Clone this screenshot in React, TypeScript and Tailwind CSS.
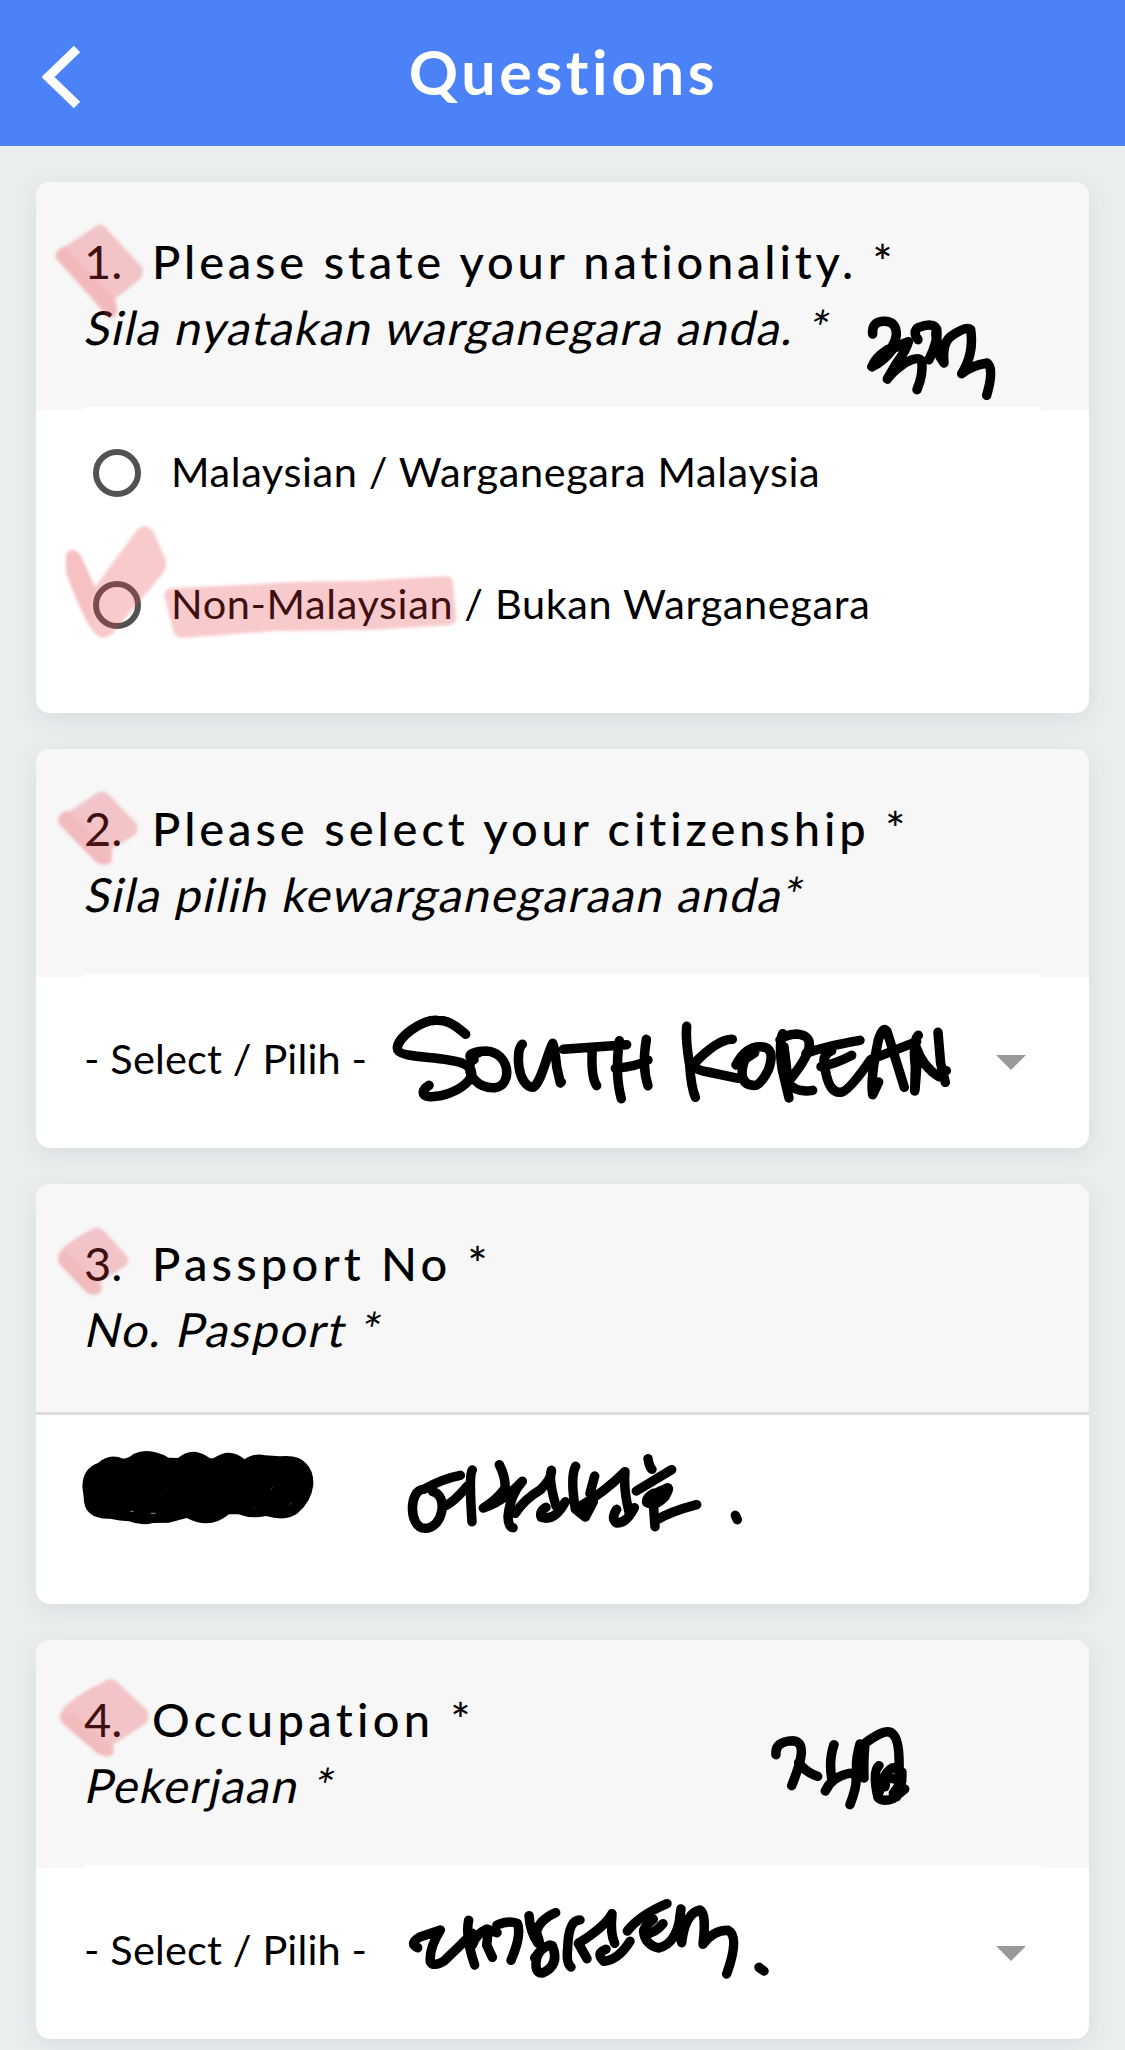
import type { ReactNode } from "react";

const FONT = "font-['Lato','Noto_Sans',sans-serif]";

function Header() {
  return (
    <header className="flex h-[146px] items-center bg-[#4c82f8] px-[42px]">
      <svg className="mt-[8px] h-[64px] w-[40px] flex-none" viewBox="0 0 40 64" fill="none">
        <path d="M35 4 L6 32 L35 60" stroke="#fff" strokeWidth="9" />
      </svg>
      <h1 className="flex-1 pr-[38px] pb-[2px] text-center text-[61px] leading-[72px] font-bold tracking-[3.6px] text-white">
        Questions
      </h1>
    </header>
  );
}

type CardProps = {
  no: number;
  title: string;
  titleTracking: string;
  subtitle: string;
  subTracking: string;
  lined?: boolean;
  bodyHeight: string;
  children?: ReactNode;
};

function Card({ no, title, titleTracking, subtitle, subTracking, lined, bodyHeight, children }: CardProps) {
  return (
    <section className="overflow-hidden rounded-[14px] bg-white shadow-[0_6px_24px_rgba(60,80,90,0.10)]">
      <div className={`flex flex-col bg-[#f7f7f7] ${lined ? "h-[231px]" : "h-[228px]"}`}>
        <div className="flex-1 px-[48px] pt-[46px] text-black">
          <h2 className="flex h-[66px] items-center text-[47px] whitespace-nowrap">
            <span className="w-[68px]">{no}.</span>
            <span className={`font-medium ${titleTracking}`}>{title}</span>
          </h2>
          <p className={`h-[66px] w-max origin-[0_70%] -skew-x-12 text-[47px] leading-[66px] whitespace-nowrap ${subTracking}`}>
            {subtitle}
          </p>
        </div>
        <div className={lined ? "h-[3px] bg-[#dedede]" : "mx-[48px] h-[3px] bg-white"} />
      </div>
      <div className={bodyHeight}>{children}</div>
    </section>
  );
}

function Option({ label, tracking }: { label: string; tracking: string }) {
  return (
    <label className="flex h-[132px] items-center pb-[6px]">
      <span className="mr-[30px] h-[48px] w-[48px] flex-none rounded-full border-[6px] border-[#525252]" />
      <span className={`pb-[4px] text-[41.5px] leading-[60px] whitespace-nowrap text-black ${tracking}`}>{label}</span>
    </label>
  );
}

function Select() {
  return (
    <div className="flex h-full items-center justify-between pr-[63px] pb-[6px] pl-[48px]">
      <span className="pb-[4px] text-[41.5px] leading-[60px] tracking-[0.15px] whitespace-nowrap text-black">
        - Select / Pilih -
      </span>
      <svg className="mt-[5px] h-[15px] w-[30px]" viewBox="0 0 30 15">
        <path d="M0 0H30L15 15Z" fill="#999" />
      </svg>
    </div>
  );
}

function Highlights() {
  return (
    <g fill="#e63e48" fillOpacity="0.27" filter="url(#soft)" strokeLinejoin="round">
      <path d="M98 225 Q102 223 107 229 L142 267 Q145 275 138 281 L115 299 L117 310 Q116 320 108 317 L91 297 L55 257 Q57 247 66 246 Z" />
      <path d="M66 247 L115 299 Q121 312 113 317 Q108 320 103 313 L56 259 Q56 249 66 247Z" fillOpacity="0.09" />
      <path d="M66 554 Q72 546 80 554 L95 587 L137 530 Q146 522 153 531 L166 560 Q167 570 160 577 L112 634 Q104 641 95 634 Q84 620 66 573Z" />
      <path d="M66 554 Q72 546 80 554 L95 587 Q88 605 92 630 Q80 614 66 573Z" fillOpacity="0.08" />
      <path d="M164 594 Q166 589 172 588 L260 584 L290 582 L360 581 L448 576 Q452 577 453 582 L456 615 Q457 623 450 625 L370 630 L275 631 L182 638 Q174 637 173 630Z" />
      <path d="M97 793 Q103 789 110 796 L136 823 Q140 830 135 835 L112 849 L112 861 Q108 868 96 862 L59 824 Q55 818 63 812 L70 811Z" />
      <path d="M63 812 Q70 809 76 818 L112 852 Q111 867 97 864 L58 824Z" fillOpacity="0.08" />
      <path d="M91 1230 Q97 1225 104 1231 L126 1255 Q130 1261 127 1265 L101 1281 L102 1290 Q98 1298 87 1293 L60 1265 Q55 1258 62 1249 Q75 1237 91 1230Z" />
      <path d="M60 1252 Q66 1250 75 1261 L101 1286 Q99 1298 87 1293 L58 1262Z" fillOpacity="0.08" />
      <path d="M104 1682 Q110 1676 117 1682 L147 1710 Q151 1718 145 1724 L113 1745 L114 1752 Q111 1759 98 1754 L62 1723 Q57 1717 64 1707 Q84 1690 104 1682Z" />
      <path d="M60 1713 Q67 1711 76 1716 L109 1744 L114 1752 Q109 1760 98 1754 L61 1722Z" fillOpacity="0.08" />
    </g>
  );
}

function Ink() {
  return (
    <g fill="none" stroke="#000" strokeWidth="28.5" strokeLinecap="round" strokeLinejoin="round">
      <g transform="translate(840 290) scale(0.33333)">
        <path d="M98 132 Q94 96 130 94 Q170 92 169 135 Q166 168 128 201 L96 230 Q103 205 142 179 L205 155 Q200 178 170 219 L142 267 Q157 245 190 222 Q232 196 245 212 Q251 250 231 299" />
        <path d="M96 230 Q130 215 160 175 L200 160" />
        <path d="M234 149 Q216 125 236 112 Q278 96 290 117 Q296 150 267 209" />
        <path d="M287 130 L300 200 L312 219 Q306 160 333 139 Q380 105 392 119 Q403 190 365 251 Q395 226 441 219 Q464 235 440 316" />
      </g>
      <g transform="translate(380 960) scale(0.33333)">
        <path d="M257 223 C215 185 195 181 172 181 C125 178 52 233 52 265 C52 297 185 286 246 309 C325 340 225 412 151 410 C122 408 124 390 147 376" />
        <path d="M282 299 C250 285 289 273 317 273 C390 275 400 375 346 383 C295 387 264 348 270 315 Q273 285 300 276" />
        <path d="M427 253 C405 270 412 380 460 382 C485 365 500 285 518 250 Q524 260 530 320 L541 369 L544 366" />
        <path d="M550 268 L740 254 M637 268 Q632 350 650 377 M718 242 Q704 345 724 416 M706 325 Q770 320 804 300 M799 238 Q785 320 804 377" />
      </g>
      <g transform="translate(660 960) scale(0.33333)">
        <path d="M80 199 Q76 240 89 315 Q93 380 106 412 M217 238 Q174 237 103 310 Q100 330 144 336 L235 355" />
        <path d="M284 278 L228 315 Q256 260 300 260 Q350 260 325 330 Q300 380 280 376 C238 375 242 330 256 296" />
        <path d="M368 221 Q355 250 367 330 L387 414 M360 240 Q374 224 410 222 Q455 226 447 263 Q439 300 382 368 Q410 400 458 391 M372 260 L387 385" />
        <path d="M438 280 Q490 260 600 241 M515 272 Q485 285 494 318 Q505 400 542 397 Q565 395 632 299 L770 245 M483 320 Q530 310 575 286" />
        <path d="M656 366 L638 404 Q630 360 655 240 Q670 195 681 214 L733 382 M775 226 Q757 240 766 320 L764 393 M768 260 Q788 320 837 350 L859 332 M834 217 L842 310 L856 367 M772 300 L765 390" />
      </g>
      <g transform="translate(390 1440) scale(0.33333)">
        <path d="M211 106 Q160 115 101 148 C55 150 56 265 105 265 C160 265 176 165 128 155 M164 198 Q190 188 232 138 M247 90 Q236 100 246 245" />
        <path d="M328 74 Q348 115 345 145 Q320 180 280 204 Q340 185 397 124 Q360 165 354 230 Q355 260 369 263 M376 220 Q400 180 453 148 Q488 110 484 91 Q475 120 498 198" />
        <path d="M468 202 Q447 215 454 232 Q495 245 526 185 M557 79 Q540 110 556 207 L586 231 L610 185 M614 108 L600 160 M560 205 Q640 160 705 95 Q700 150 718 220 L733 203 Q710 250 680 249 Q662 235 680 208" />
        <path d="M774 56 Q778 80 786 88 M739 153 L845 89 M792 190 L820 150 Q848 130 825 170 Q795 202 770 187 Q768 172 790 160 L820 160 M791 205 L795 260 M800 240 Q840 215 920 194" />
        <path d="M785 180 L815 160" strokeWidth="46" />
        <path d="M1036 226 L1042 239" />
      </g>
      <g transform="translate(750 1710) scale(0.33333)">
        <path d="M78 134 Q74 94 128 92 C170 95 156 150 125 227 M146 158 Q168 188 203 199" />
        <path d="M252 104 Q236 150 245 205 M226 243 Q245 200 298 190 Q338 183 300 284" />
        <path d="M330 102 Q314 160 322 188 L342 204 Q340 150 345 100 Q410 50 428 72 Q450 90 447 180" />
        <path d="M387 167 Q366 185 384 262 Q400 278 430 265 L464 237 M388 245 Q398 190 428 173 L456 186 L455 215 L430 250 M410 190 L405 230 M425 205 L448 210 L440 260" />
      </g>
      <g transform="translate(390 1880) scale(0.33333)">
        <path d="M83 203 Q55 190 92 170 L151 150 Q117 205 121 245 Q130 262 162 243 Q205 202 247 160 M236 121 Q225 170 254 255 M247 195 Q260 160 290 147 L321 158 M295 150 L290 195 L307 232 M321 135 Q355 120 382 130 Q396 165 363 241" />
        <path d="M417 107 Q420 155 444 190 M497 98 Q450 118 439 155 L448 185 M434 234 Q465 190 487 197 Q510 255 458 279 Q430 280 441 230 Q450 205 480 195" />
        <path d="M570 120 Q535 120 533 205 Q528 250 543 261 M666 101 Q645 140 565 190 L591 236 M666 101 Q660 160 674 190 M648 208 Q615 220 642 244 Q685 240 720 184" />
        <path d="M831 71 Q750 105 712 153 M790 118 Q755 145 762 160 Q790 165 819 131 M762 163 Q770 195 805 204 Q865 192 873 87 Q862 145 875 188 Q885 100 930 90 Q950 100 939 193 Q970 150 1015 151 Q1050 170 1010 282" />
        <path d="M1107 262 L1122 273" />
      </g>
    </g>
  );
}

function Redaction() {
  return (
    <g transform="translate(20 1400) scale(0.33333)">
      <path
        d="M187 260 Q188 205 234 189 Q267 158 310 176 Q326 175 340 162 Q388 140 446 173 L474 174 Q520 136 570 175 L580 175 Q630 140 674 178 Q700 158 735 166 L780 169 Q835 163 858 190 Q882 214 880 255 Q874 305 833 340 Q800 366 738 348 Q695 358 655 343 L627 343 Q570 391 500 354 L447 368 L400 369 Q362 378 327 364 Q300 363 270 356 Q190 358 191 290Z"
        fill="#000"
      />
      <path d="M331 334h9M393 340h14" stroke="#ddd" strokeWidth="2" />
      <path d="M752 270l6-9M806 314l10-6M424 286h2M703 325h3" stroke="#777" strokeWidth="1.5" />
    </g>
  );
}

export default function App() {
  return (
    <div className={`relative h-[2050px] w-[1125px] overflow-hidden bg-[#eaeeef] ${FONT}`}>
      <Header />
      <main className="flex flex-col gap-[36px] px-[36px] pt-[36px]">
        <Card
          no={1}
          title="Please state your nationality. *"
          titleTracking="tracking-[3.8px]"
          subtitle="Sila nyatakan warganegara anda. *"
          subTracking="tracking-[1.4px]"
          bodyHeight="h-[303px] pl-[57px]"
        >
          <Option label="Malaysian / Warganegara Malaysia" tracking="tracking-[0.6px]" />
          <Option label="Non-Malaysian / Bukan Warganegara" tracking="tracking-[0.6px]" />
        </Card>
        <Card
          no={2}
          title="Please select your citizenship *"
          titleTracking="tracking-[3.9px]"
          subtitle="Sila pilih kewarganegaraan anda*"
          subTracking="tracking-[1.45px]"
          bodyHeight="h-[171px]"
        >
          <Select />
        </Card>
        <Card
          no={3}
          title="Passport No *"
          titleTracking="tracking-[4.2px]"
          subtitle="No. Pasport *"
          subTracking="tracking-[1.6px]"
          lined
          bodyHeight="h-[189px]"
        />
        <Card
          no={4}
          title="Occupation *"
          titleTracking="tracking-[4.3px]"
          subtitle="Pekerjaan *"
          subTracking="tracking-[1.5px]"
          bodyHeight="h-[171px]"
        >
          <Select />
        </Card>
      </main>
      <svg className="pointer-events-none absolute inset-0" width="1125" height="2050" viewBox="0 0 1125 2050">
        <defs>
          <filter id="soft" x="-5%" y="-5%" width="110%" height="110%">
            <feGaussianBlur stdDeviation="1.6" />
          </filter>
        </defs>
        <Highlights />
        <Ink />
        <Redaction />
      </svg>
    </div>
  );
}
